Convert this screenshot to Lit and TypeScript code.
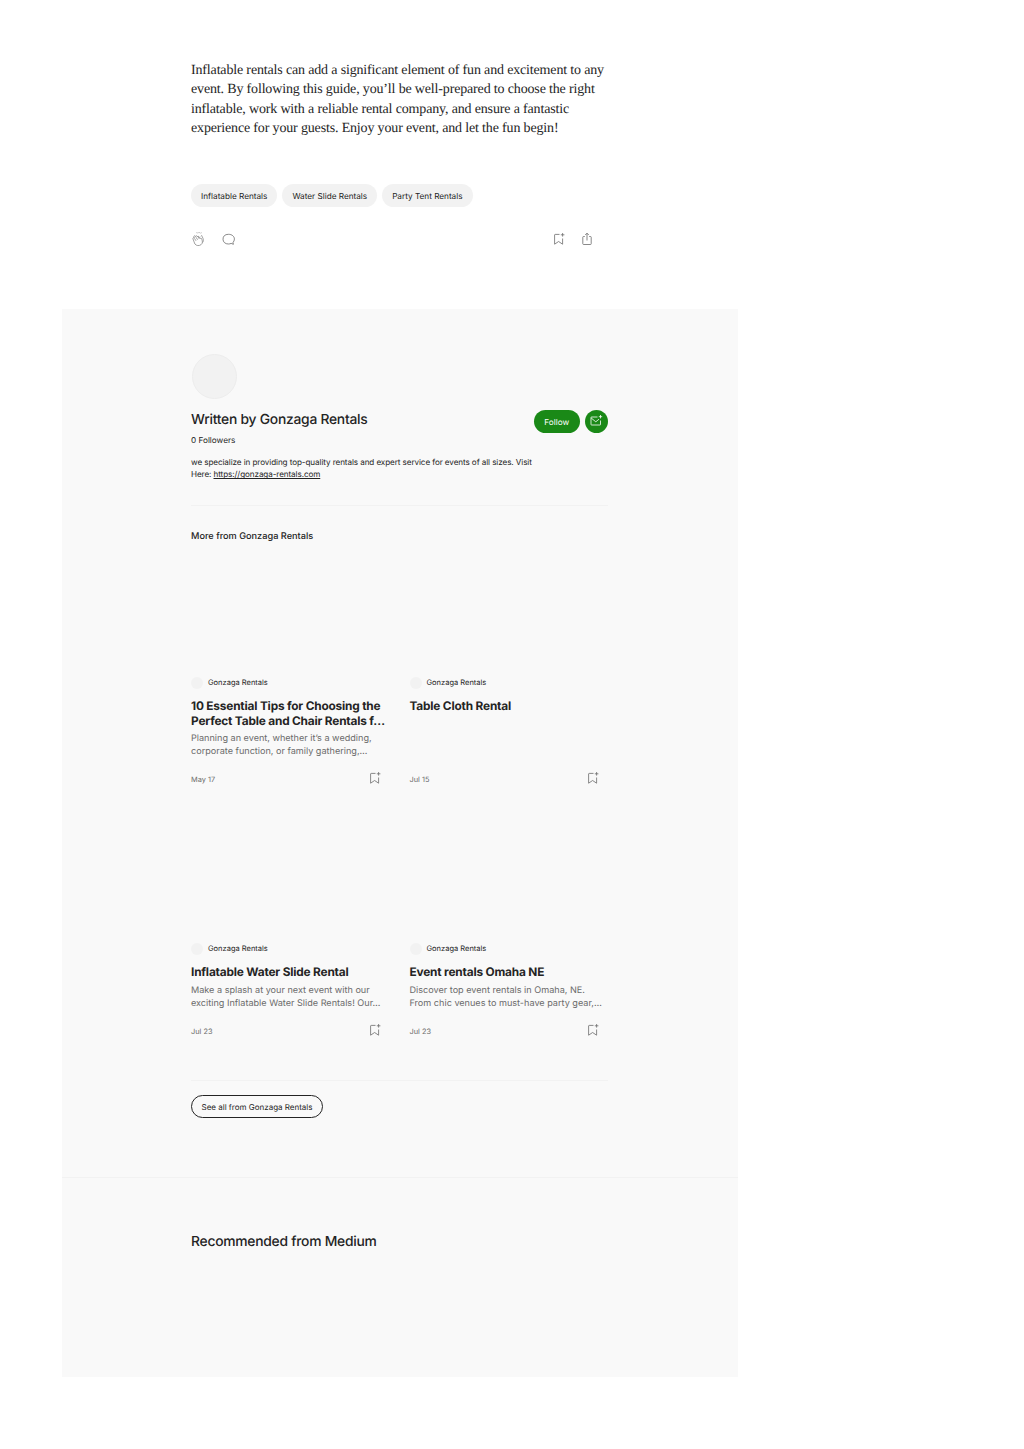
import { LitElement, html, css } from "lit";
import { customElement } from "lit/decorators.js";

const saveIcon = () => html`<svg class="ico" viewBox="0 0 14 14" width="14" height="14" fill="none" stroke="#6b6b6b" stroke-width="0.8">
  <path d="M7.5 2.4H3.2a.6.6 0 0 0-.6.6v9.2l4-2.7 4 2.7V6.5" />
  <path d="M10.6 1v3.6M8.800 2.800h3.600" />
</svg>`;

const cards = [
  { title: "10 Essential Tips for Choosing the Perfect Table and Chair Rentals f…", desc: "Planning an event, whether it’s a wedding, corporate function, or family gathering,…", date: "May 17" },
  { title: "Table Cloth Rental", desc: "", date: "Jul 15" },
  { title: "Inflatable Water Slide Rental", desc: "Make a splash at your next event with our exciting Inflatable Water Slide Rentals! Our…", date: "Jul 23" },
  { title: "Event rentals Omaha NE", desc: "Discover top event rentals in Omaha, NE. From chic venues to must-have party gear,…", date: "Jul 23" },
];

@customElement("app-root")
export class AppRoot extends LitElement {
  static styles = css`
    :host { display: block; background: #fff; height: 1449px; font-family: Inter, "Liberation Sans", sans-serif; color: #242424; text-rendering: geometricPrecision; }
    * { box-sizing: border-box; }
    .top { width: 417px; margin-left: 191px; padding-top: 60.5px; height: 309px; }
    .body { margin: 0; font: 14px/19.6px "Liberation Serif", serif; letter-spacing: -0.16px; color: #242424; }
    .tags { display: flex; gap: 5px; margin-top: 45.5px; }
    .tag { height: 23px; padding: 0 10px; border-radius: 12px; background: #f2f2f2; font-size: 8.2px; line-height: 24px; color: #242424; }
    .actions { display: flex; justify-content: space-between; margin-top: 23.5px; height: 16px; align-items: center; }
    .group { display: flex; align-items: center; gap: 14px; }
    .group.right { gap: 14px; padding-right: 14px; }
    .ico { display: block; }
    .panel { width: 675.5px; margin-left: 62px; background: #f9f9f9; height: 1068px; }
    .author { height: 869px; padding-top: 45px; border-bottom: 1px solid #f2f2f2; padding-left: 129px; }
    .col { width: 417px; }
    .avatar { width: 45px; height: 45px; border-radius: 50%; background: #f2f2f2; border: 1px solid #ededed; margin-left: 0.5px; }
    .head { display: flex; justify-content: space-between; align-items: flex-start; margin-top: 8px; height: 24px; }
    h2 { margin: 1.5px 0 0; font-size: 13.85px; line-height: 23px; font-weight: 500; letter-spacing: -0.25px; color: #242424; }
    .btns { display: flex; gap: 5px; align-items: center; margin-top: 2.5px; }
    .follow { height: 23.500px; width: 45.500px; border-radius: 12px; background: #1a8917; color: #fff; font-size: 8.2px; line-height: 24.500px; text-align: center; }
    .sub { width: 23.500px; height: 23.500px; border-radius: 50%; background: #1a8917; display: flex; align-items: center; justify-content: center; }
    .followers { font-size: 8.2px; line-height: 12px; margin-top: 3px; }
    .bio { font-size: 8.1px; line-height: 12.3px; letter-spacing: -0.08px; margin: 10px 0 0; width: 350px; color: #242424; }
    .bio a { color: inherit; text-decoration: underline; }
    .rule { height: 1px; background: #f2f2f2; margin-top: 24px; }
    .more { font-size: 9.2px; line-height: 14px; font-weight: 500; margin-top: 24px; }
    .grid { display: grid; grid-template-columns: 199.5px 199.5px; column-gap: 19px; }
    .card { padding-top: 133px; height: 266px; }
    .card.r2 { height: 270px; }
    .who { display: flex; align-items: center; gap: 5px; font-size: 7.5px; line-height: 12px; }
    .dot { width: 12px; height: 12px; border-radius: 50%; background: #f2f2f2; }
    h3 { margin: 10.800px 0 0; font-size: 11.85px; line-height: 14.200px; font-weight: 700; letter-spacing: -0.18px; color: #242424; }
    .desc { margin: 5.600px 0 0; font-size: 9.100px; line-height: 12.400px; color: #6b6b6b; }
    .meta { display: flex; justify-content: space-between; align-items: center; height: 14px; margin-top: 14px; font-size: 7.400px; color: #6b6b6b; padding-right: 9px; }
    .meta .ico { margin-bottom: 2px; }
    .nodesc .meta { margin-top: 58.800px; }
    .rule2 { height: 1px; background: #f2f2f2; }
    .see { display: inline-block; height: 23px; line-height: 22px; padding: 0 9.500px; margin-top: 14px; border: 1px solid #242424; border-radius: 12px; font-size: 8px; }
    .rec { padding: 53px 0 0 129px; font-size: 13.85px; line-height: 22px; font-weight: 500; letter-spacing: -0.25px; }
  `;

  private renderCard(c: typeof cards[number], row: string) {
    return html`<div class="card ${row} ${c.desc ? "" : "nodesc"}">
      <div class="who"><span class="dot"></span>Gonzaga Rentals</div>
      <h3>${c.title}</h3>
      ${c.desc ? html`<p class="desc">${c.desc}</p>` : ""}
      <div class="meta"><span>${c.date}</span>${saveIcon()}</div>
    </div>`;
  }

  render() {
    return html`
      <div class="top">
        <p class="body">Inflatable rentals can add a significant element of fun and excitement to any event. By following this guide, you’ll be well-prepared to choose the right inflatable, work with a reliable rental company, and ensure a fantastic experience for your guests. Enjoy your event, and let the fun begin!</p>
        <div class="tags">
          <span class="tag">Inflatable Rentals</span>
          <span class="tag">Water Slide Rentals</span>
          <span class="tag">Party Tent Rentals</span>
        </div>
        <div class="actions">
          <div class="group">
            <svg class="ico" viewBox="0 0 16 16" width="16" height="16" fill="none" stroke="#8a8a8a" stroke-width="0.8">
              <path d="M2 8c-.5-1 .6-1.800 1.300-1l-.4-1.200c-.3-1 .9-1.500 1.400-.7l.3.500c0-1 1.100-1.200 1.600-.4l.5.800c.2-.8 1.300-.8 1.600 0l.9 1.600c.5-.7 1.400-.3 1.600.4l.5 2c.3 1.600-.2 2.800-1.200 3.600-2 1.500-4.700 1.300-6.200-.600z"/>
              <path d="M5 6.200l1.600 2.600M6.700 5.200l1.600 2.700M3.500 7.400l1.500 2.400M9.800 5.300l.8-.8 1.300 2.600c.8 1.800.7 3.200-.4 4.500"/>
              <path d="M6.200 2.300l-.3-1M8 2.100l.1-1.100M9.800 2.400l.4-.9"/>
            </svg>
            <svg class="ico" viewBox="0 0 16 16" width="16" height="16" fill="none" stroke="#6b6b6b" stroke-width="0.8">
              <path d="M12 11.500c.9-1 1.400-2.200 1.400-3.400C13.400 5.400 11 3.300 7.400 3.300S2 5.300 2 8.200s2.300 4.800 5.400 4.800c1 0 1.900-.2 2.700-.6l2.300.9z"/>
            </svg>
          </div>
          <div class="group right">
            ${saveIcon()}
            <svg class="ico" viewBox="0 0 14 14" width="14" height="14" fill="none" stroke="#6b6b6b" stroke-width="0.8">
              <path d="M4.800 4.500H3.500a.7.7 0 0 0-.7.7v6.600c0 .4.300.7.700.7h7a.7.7 0 0 0 .7-.7V5.200a.7.7 0 0 0-.7-.7H9.200"/>
              <path d="M7 8.500V1.200M5.200 3L7 1.200 8.800 3"/>
            </svg>
          </div>
        </div>
      </div>
      <div class="panel">
        <div class="author">
          <div class="col">
            <div class="avatar"></div>
            <div class="head">
              <h2>Written by Gonzaga Rentals</h2>
              <div class="btns">
                <span class="follow">Follow</span>
                <span class="sub">
                  <svg viewBox="0 0 14 14" width="14" height="14" fill="none" stroke="#fff" stroke-width="0.8">
                    <path d="M8.500 3H2.500a.5.500 0 0 0-.5.500v7a.5.500 0 0 0 .5.500h8.500a.5.500 0 0 0 .5-.5V6.500"/>
                    <path d="M2.200 4l4.600 3.800L10 5.200"/>
                    <path d="M11.500 1v3.400M9.800 2.700h3.400"/>
                  </svg>
                </span>
              </div>
            </div>
            <div class="followers">0 Followers</div>
            <p class="bio">we specialize in providing top-quality rentals and expert service for events of all sizes. Visit Here: <a>https://gonzaga-rentals.com</a></p>
            <div class="rule"></div>
            <div class="more">More from Gonzaga Rentals</div>
            <div class="grid">
              ${this.renderCard(cards[0], "r1")}
              ${this.renderCard(cards[1], "r1")}
              ${this.renderCard(cards[2], "r2")}
              ${this.renderCard(cards[3], "r2")}
            </div>
            <div class="rule2"></div>
            <span class="see">See all from Gonzaga Rentals</span>
          </div>
        </div>
        <div class="rec">Recommended from Medium</div>
      </div>
    `;
  }
}
